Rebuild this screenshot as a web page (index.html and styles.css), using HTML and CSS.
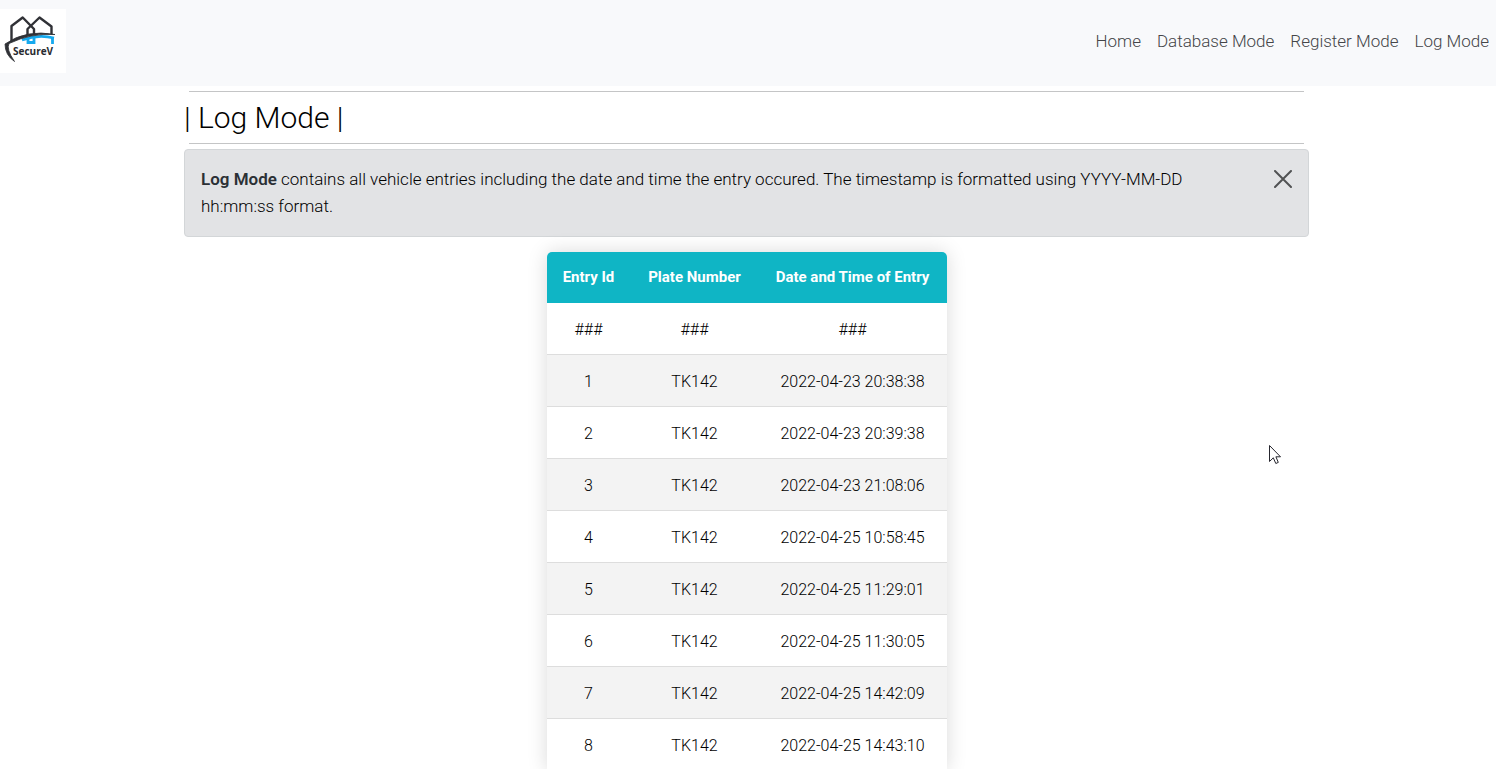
FILE: index.html
```html
<!DOCTYPE html>
<html lang="en">
<head>
<meta charset="utf-8">
<meta name="viewport" content="width=device-width, initial-scale=1">
<title>SecureV</title>
<link rel="stylesheet" href="styles.css">
</head>
<body>
<header class="navbar">
  <a class="brand" href="#" aria-label="SecureV">
    <svg class="logo" viewBox="0 0 66 64" width="66" height="64">
      <rect width="66" height="64" fill="#fff"/>
      <g fill="none" stroke="#303136" stroke-width="2.400" stroke-linejoin="round">
        <path d="M11.500 32V17L22.700 8.500L34 20V25"/>
        <path d="M27.500 26V20L39.500 8.500L51.500 17.500V25"/>
      </g>
      <path d="M22 31Q38 25 54 29" fill="none" stroke="#16a9ee" stroke-width="2.800"/>
      <path d="M28 29.500V33.500H34V29M52.500 28.500V35" fill="none" stroke="#16a9ee" stroke-width="2.800"/>
      <path d="M5 35Q26 20 55 25.500Q31 24 9 34.500Q6 40 14.500 52.500Q5 46 5 35Z" fill="#303136" stroke="#303136" stroke-width=".8"/>
      <text class="logo-text" x="13" y="46">SecureV</text>
    </svg>
  </a>
  <nav class="links">
    <a href="#">Home</a>
    <a href="#">Database Mode</a>
    <a href="#">Register Mode</a>
    <a href="#">Log Mode</a>
  </nav>
</header>
<main class="content">
  <div class="container">
    <hr class="rule">
    <h1 class="title">| Log Mode |</h1>
    <hr class="rule">
    <div class="alert" role="alert">
      <p class="message"><strong>Log Mode</strong> contains all vehicle entries including the date and time the entry occured. The timestamp is formatted using YYYY-MM-DD hh:mm:ss format.</p>
      <button class="close" type="button" aria-label="Close">
        <svg viewBox="0 0 18 18" width="18" height="18"><path d="M1 1L17 17M17 1L1 17" fill="none" stroke="#515253" stroke-width="2" stroke-linecap="round"/></svg>
      </button>
    </div>
    <table class="log">
      <colgroup><col class="col-id"><col class="col-plate"><col class="col-date"></colgroup>
      <thead><tr><th scope="col">Entry Id</th><th scope="col">Plate Number</th><th scope="col">Date and Time of Entry</th></tr></thead>
      <tbody>
        <tr><td>###</td><td>###</td><td>###</td></tr>
        <tr><td>1</td><td>TK142</td><td>2022-04-23 20:38:38</td></tr>
        <tr><td>2</td><td>TK142</td><td>2022-04-23 20:39:38</td></tr>
        <tr><td>3</td><td>TK142</td><td>2022-04-23 21:08:06</td></tr>
        <tr><td>4</td><td>TK142</td><td>2022-04-25 10:58:45</td></tr>
        <tr><td>5</td><td>TK142</td><td>2022-04-25 11:29:01</td></tr>
        <tr><td>6</td><td>TK142</td><td>2022-04-25 11:30:05</td></tr>
        <tr><td>7</td><td>TK142</td><td>2022-04-25 14:42:09</td></tr>
        <tr><td>8</td><td>TK142</td><td>2022-04-25 14:43:10</td></tr>
      </tbody>
    </table>
  </div>
</main>
<svg class="pointer" viewBox="0 0 12 20" width="12" height="20" aria-hidden="true"><path d="M.5 .5V16.500L4.300 12.800L6.800 18.500L9.300 17.400L6.900 11.800H11.500Z" fill="#fff" stroke="#26262e"/></svg>
</body>
</html>
```
FILE: styles.css
```css
* { box-sizing: border-box; }

body {
  position: relative;
  height: 100vh;
  margin: 0;
  overflow: hidden;
  background: #fff;
  color: #000;
  font-family: Roboto, "Open Sans", sans-serif;
  font-size: 17px;
  font-weight: 300;
  line-height: 27px;
}

.navbar {
  display: flex;
  align-items: center;
  justify-content: space-between;
  padding: 9px 7px 13px 0;
  background: #f8f9fb;
}

.brand, .logo { display: block; }

.logo-text {
  fill: #292b30;
  font-family: "Open Sans", sans-serif;
  font-size: 10px;
  font-weight: 700;
}

.links {
  display: flex;
  gap: 16px;
}

.links a {
  color: #444548;
  text-decoration: none;
}

.content { padding: 5px 3px 0 0; }

.container {
  max-width: 1125px;
  margin: 0 auto;
}

.rule {
  height: 1px;
  margin: 0 5px;
  border: 0;
  background: #c4c5c6;
}

.title {
  margin: 0;
  padding: 6px 0;
  font-size: 30px;
  font-weight: 300;
  line-height: 39px;
}

.alert {
  display: flex;
  align-items: flex-start;
  justify-content: space-between;
  gap: 48px;
  margin: 5px 0 15px;
  padding: 16px;
  border: 1px solid #d3d6d8;
  border-radius: 4px;
  background: #e2e3e5;
}

.message { max-width: 1020px; margin: 0; }

.message strong {
  color: #2b3035;
  font-weight: 600;
}

.close {
  padding: 4px 0;
  border: 0;
  background: none;
}

.close svg { display: block; }

.log {
  width: 400px;
  max-width: 100%;
  margin: 0 auto;
  overflow: hidden;
  border-spacing: 0;
  border-radius: 5px 5px 0 0;
  box-shadow: 0 0 20px rgba(0, 0, 0, 0.15);
  font-size: 16px;
  table-layout: fixed;
  text-align: center;
}

.col-id { width: 21%; }
.col-plate { width: 32%; }
.col-date { width: 47%; }

.log th {
  padding: 12px 0;
  background: #0fb5c5;
  color: #fff;
  font-size: 15px;
  font-weight: 700;
  white-space: nowrap;
}

.log td {
  padding: 13px 0 11px;
  border-bottom: 1px solid #ddd;
}

.log tbody tr { background: #fff; }
.log tbody tr:nth-child(even) { background: #f3f3f3; }

.pointer {
  position: absolute;
  top: 445px;
  left: 1269px;
}
```
